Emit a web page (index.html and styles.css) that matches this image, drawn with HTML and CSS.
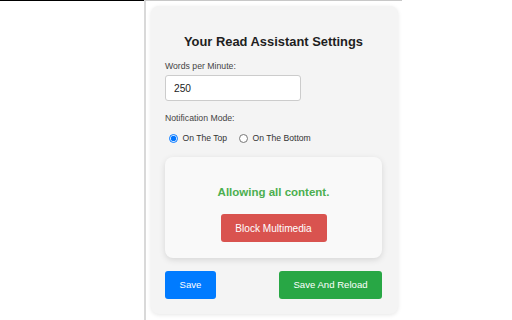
FILE: index.html
```html
<!DOCTYPE html>
<html lang="en">
<head>
<meta charset="utf-8">
<title>Your Read Assistant Settings</title>
<link rel="stylesheet" href="styles.css">
</head>
<body>
<div class="page">
  <div class="left-pane"></div>
  <div class="popup-frame">
    <div class="card">
      <h2 class="title">Your Read Assistant Settings</h2>
      <label class="field-label" for="wpm">Words per Minute:</label>
      <input class="text-input" id="wpm" type="text" value="250">
      <div class="field-label mode-label">Notification Mode:</div>
      <div class="radio-row">
        <label class="radio-option"><input type="radio" name="mode" checked><span>On The Top</span></label>
        <label class="radio-option"><input type="radio" name="mode"><span>On The Bottom</span></label>
      </div>
      <div class="content-box">
        <div class="status">Allowing all content.</div>
        <button class="btn btn-red">Block Multimedia</button>
      </div>
      <div class="actions">
        <button class="btn btn-blue">Save</button>
        <button class="btn btn-green">Save And Reload</button>
      </div>
    </div>
  </div>
</div>
</body>
</html>
```
FILE: styles.css
```css
html, body {
  margin: 0;
  padding: 0;
  background: #ffffff;
  font-family: "Liberation Sans", Arial, sans-serif;
}
.page {
  display: flex;
  height: 320px;
  overflow: hidden;
}
.left-pane {
  width: 144px;
  border-top: 1px solid #000000;
}
.popup-frame {
  width: 247px;
  border-left: 2px solid #d9d9d9;
  border-top: 1px solid #c8c8c8;
  padding: 5px 4px 0 5px;
}
.card {
  width: 247px;
  height: 308px;
  box-sizing: border-box;
  background: #f4f4f4;
  border-radius: 8px;
  box-shadow: 0 1px 4px rgba(0,0,0,0.10);
  padding: 15px 16px 0 14px;
  display: flex;
  flex-direction: column;
  align-items: flex-start;
}
.title {
  align-self: stretch;
  margin: 13px 0 0;
  font-size: 12.9px;
  line-height: 16px;
  font-weight: bold;
  color: #1e1e1e;
  text-align: center;
}
.field-label {
  display: block;
  margin-top: 11px;
  font-size: 8.7px;
  line-height: 11px;
  color: #444444;
}
.text-input {
  margin-top: 3px;
  width: 136px;
  height: 26px;
  box-sizing: border-box;
  border: 1px solid #cccccc;
  border-radius: 3px;
  padding: 0 0 0 8px;
  font-family: "Liberation Sans", Arial, sans-serif;
  font-size: 10.2px;
  color: #222222;
  background: #ffffff;
  outline: none;
}
.mode-label {
  margin-top: 11.5px;
}
.radio-row {
  margin-top: 9.5px;
  height: 11px;
  display: flex;
  align-items: center;
  gap: 12px;
  padding-left: 4px;
}
.radio-option {
  display: flex;
  align-items: center;
  gap: 5px;
  font-size: 8.6px;
  line-height: 11px;
  color: #333333;
}
.radio-option input {
  margin: 0;
  width: 8.5px;
  height: 8.5px;
}
.content-box {
  margin-top: 12.7px;
  align-self: stretch;
  height: 101px;
  box-sizing: border-box;
  padding-top: 28px;
  background: #f9f9f9;
  border-radius: 8px;
  box-shadow: 0 2px 6px rgba(0,0,0,0.12);
  display: flex;
  flex-direction: column;
  align-items: center;
}
.status {
  font-size: 11.5px;
  line-height: 14px;
  font-weight: bold;
  color: #4caf50;
}
.btn {
  border: none;
  border-radius: 3px;
  color: #ffffff;
  font-family: "Liberation Sans", Arial, sans-serif;
  padding: 0;
  cursor: pointer;
}
.btn-red {
  margin-top: 15.6px;
  width: 106px;
  height: 28px;
  background: #d9534f;
  font-size: 10.1px;
}
.actions {
  margin-top: 13.6px;
  align-self: stretch;
  display: flex;
  justify-content: space-between;
}
.btn-blue {
  width: 51px;
  height: 27.4px;
  background: #007bff;
  font-size: 9.6px;
}
.btn-green {
  width: 103px;
  height: 27.4px;
  background: #28a745;
  font-size: 9.6px;
}
```
